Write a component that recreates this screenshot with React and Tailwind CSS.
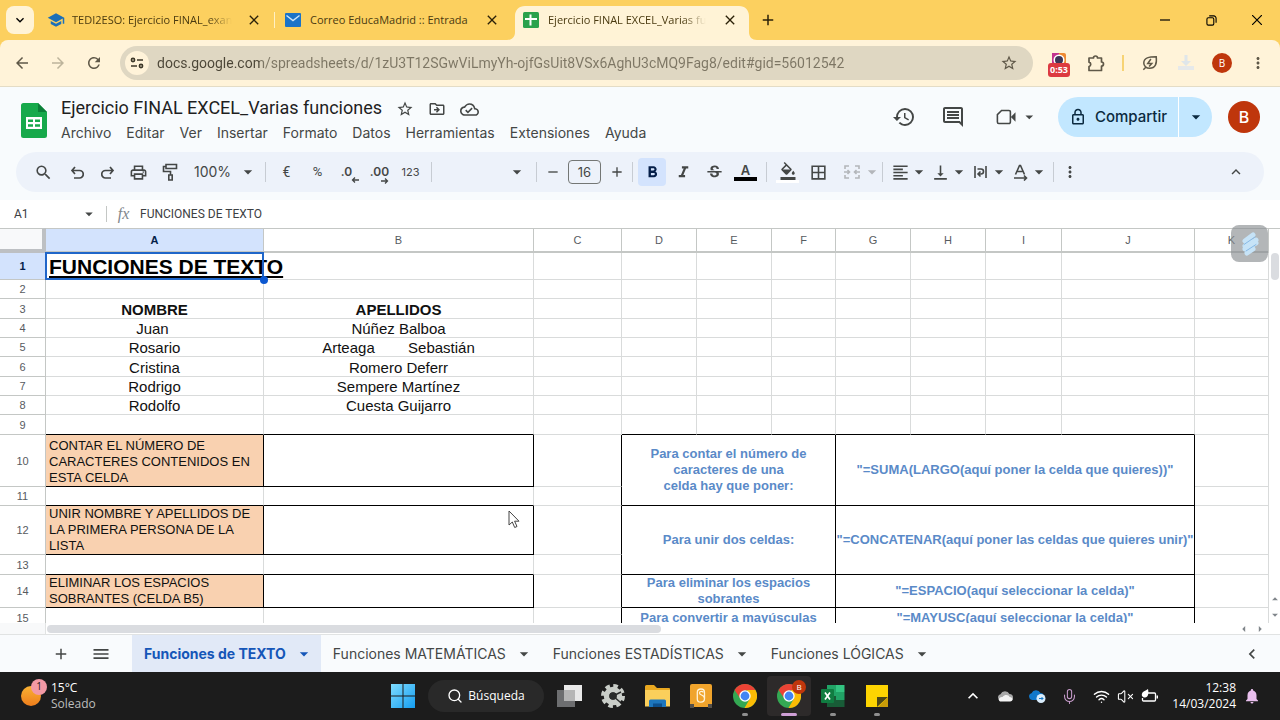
import React, { useState } from 'react';
import {
  MdAdd,
  MdArrowBack,
  MdArrowDropDown,
  MdArrowForward,
  MdChevronLeft,
  MdClose,
  MdExpandLess,
  MdExpandMore,
  MdFormatAlignLeft,
  MdFormatBold,
  MdFormatColorFill,
  MdFormatItalic,
  MdHistory,
  MdMenu,
  MdMoreVert,
  MdNotifications,
  MdOutlineBorderAll,
  MdOutlineCloudDone,
  MdOutlineDriveFileMove,
  MdOutlineInsertComment,
  MdOutlineLock,
  MdOutlinePrint,
  MdRefresh,
  MdRemove,
  MdSchool,
  MdSearch,
  MdStarBorder,
  MdStrikethroughS,
  MdVerticalAlignBottom,
} from 'react-icons/md';
import { Wifi, VolumeX, Mic, Search } from 'lucide-react';

const browserTabs = [
  { id: 1, title: 'TEDI2ESO: Ejercicio FINAL_exan', icon: 'school' },
  { id: 2, title: 'Correo EducaMadrid :: Entrada', icon: 'mail' },
  { id: 3, title: 'Ejercicio FINAL EXCEL_Varias fu', icon: 'sheet' },
];

const menus = [
  'Archivo',
  'Editar',
  'Ver',
  'Insertar',
  'Formato',
  'Datos',
  'Herramientas',
  'Extensiones',
  'Ayuda',
];

const sheets = [
  'Funciones de TEXTO',
  'Funciones MATEMÁTICAS',
  'Funciones ESTADÍSTICAS',
  'Funciones LÓGICAS',
];

const columns = ['A', 'B', 'C', 'D', 'E', 'F', 'G', 'H', 'I', 'J', 'K'];

const people = [
  { row: 4, height: 'h-[19px]', name: 'Juan ', surname: 'Núñez Balboa' },
  { row: 5, height: 'h-[19px]', name: 'Rosario', surname: 'Arteaga        Sebastián' },
  { row: 6, height: 'h-[20px]', name: 'Cristina', surname: 'Romero Deferr' },
  { row: 7, height: 'h-[19px]', name: 'Rodrigo', surname: 'Sempere Martínez' },
  { row: 8, height: 'h-[19px]', name: 'Rodolfo', surname: 'Cuesta Guijarro' },
];

/* ---------- browser ---------- */

function TabIcon({ name }) {
  if (name === 'school') return <MdSchool className="size-[18px] text-[#1b6fb8]" />;
  if (name === 'mail') {
    return (
      <svg viewBox="0 0 16 14" className="h-[14px] w-4">
        <rect width="16" height="14" rx="1" fill="#1a73c8" />
        <path d="M1.5 2.5 8 7.5l6.5-5" fill="none" stroke="#cfe6fa" strokeWidth="1.4" />
      </svg>
    );
  }
  return (
    <svg viewBox="0 0 16 16" className="size-4">
      <rect width="16" height="16" rx="1.5" fill="#2ba24c" />
      <path d="M6.5 2.500h2v3.500H14v2H8.500v5.500h-2V8H2V6h4.500z" fill="#fff" />
    </svg>
  );
}

function BrowserTab({ tab, active, separator, onSelect }) {
  return (
    <div className="relative flex h-full w-[238px] min-w-0 pt-[6px]">
      {active && (
        <svg viewBox="0 0 250 34" className="absolute bottom-0 -left-[6px] h-[34px] w-[250px]">
          <path
            d="M0 34c5 0 8-3 8-8V10C8 4 12 0 18 0h214c6 0 10 4 10 10v16c0 5 3 8 8 8z"
            fill="#fff3d6"
          />
        </svg>
      )}
      <div className="relative flex h-7 w-full items-center pl-[10px]">
        <span className="flex w-[25px] shrink-0 items-center">
          <TabIcon name={tab.icon} />
        </span>
        <button
          onClick={onSelect}
          className={`mr-auto text-left text-[11px] whitespace-nowrap text-[#4a3a10] ${
            tab.icon === 'mail' ? '' : 'mask-r-from-85%'
          }`}
        >
          {tab.title}
        </button>
        <button aria-label="Cerrar pestaña" className="mr-[13px] shrink-0 text-[#2b2108]">
          <MdClose className="size-4" />
        </button>
      </div>
      {separator && <span className="absolute top-3 right-0 h-4 w-px bg-[#fff0c4]" />}
    </div>
  );
}

function TabStrip() {
  const [current, setCurrent] = useState(3);
  return (
    <div className="flex h-10 items-center bg-[#fcd05f] pl-[6px]">
      <button
        aria-label="Buscar pestañas"
        className="mr-[3px] flex size-7 shrink-0 items-center justify-center rounded-lg bg-[#fff3d6] text-black"
      >
        <MdExpandMore className="size-4" />
      </button>
      {browserTabs.map((tab) => (
        <BrowserTab
          key={tab.id}
          tab={tab}
          active={current === tab.id}
          separator={tab.id === 1}
          onSelect={() => setCurrent(tab.id)}
        />
      ))}
      <button aria-label="Nueva pestaña" className="ml-2 text-[#2b2108]">
        <MdAdd className="size-[18px]" />
      </button>
      <div className="ml-auto flex h-full text-black">
        <button aria-label="Minimizar" className="flex w-[46px] items-center justify-center">
          <svg viewBox="0 0 10 10" className="size-[10px]">
            <path d="M0 5h10" stroke="currentColor" strokeWidth="1.2" />
          </svg>
        </button>
        <button aria-label="Restaurar" className="flex w-[46px] items-center justify-center">
          <svg viewBox="0 0 12 12" className="size-[11px]" fill="none" stroke="currentColor" strokeWidth="1.2">
            <rect x="1" y="3" width="7.500" height="8" rx="1.500" />
            <path d="M3.500 1h5a2.500 2.500 0 0 1 2.500 2.500V8.500" />
          </svg>
        </button>
        <button aria-label="Cerrar" className="flex w-[46px] items-center justify-center">
          <svg viewBox="0 0 10 10" className="size-[10px]">
            <path d="M0 0l10 10M10 0L0 10" stroke="currentColor" strokeWidth="1.200" />
          </svg>
        </button>
      </div>
    </div>
  );
}

function AddressBar() {
  return (
    <div className="bg-[#fcd05f]">
      <div className="flex h-[47px] items-center rounded-t-lg border-b border-[#e4dcc6] bg-[#fff3d9] pl-1 text-[#5f5848]">
        <button aria-label="Atrás" className="flex w-9 justify-center">
          <MdArrowBack className="size-[18px]" />
        </button>
        <button aria-label="Adelante" className="flex w-9 justify-center text-[#bdb49c]">
          <MdArrowForward className="size-[18px]" />
        </button>
        <button aria-label="Recargar" className="flex w-9 justify-center">
          <MdRefresh className="size-[18px]" />
        </button>
        <div className="ml-2 flex h-[34px] min-w-0 flex-1 items-center rounded-full bg-[#dfd7c2] pl-[5px]">
          <button
            aria-label="Información del sitio"
            className="flex size-6 shrink-0 items-center justify-center rounded-full bg-[#fff3d9] text-[#3c3728]"
          >
            <svg viewBox="0 0 14 12" className="h-3 w-[14px]" fill="none" stroke="currentColor" strokeWidth="1.600">
              <circle cx="3" cy="3" r="1.600" />
              <path d="M7 3h6M1 9h6" />
              <circle cx="11" cy="9" r="1.600" />
            </svg>
          </button>
          <input
            aria-label="Dirección"
            defaultValue="docs.google.com/spreadsheets/d/1zU3T12SGwViLmyYh-ojfGsUit8VSx6AghU3cMQ9Fag8/edit#gid=56012542"
            className="ml-2 min-w-0 flex-1 bg-[linear-gradient(90deg,#4b4536_103px,#7d7664_103px)] bg-clip-text font-[Roboto,sans-serif] text-sm text-transparent outline-none"
          />
          <button aria-label="Marcador" className="flex w-12 justify-center">
            <MdStarBorder className="size-[18px]" />
          </button>
        </div>
        <button aria-label="Grabación" className="relative ml-[7px] flex w-[38px] justify-center">
          <svg viewBox="0 0 22 24" className="h-6 w-[22px]">
            <path d="M4 2h8v10H4z" fill="#c2338f" />
            <path d="M11 2h5a2 2 0 0 1 2 2v8h-7z" fill="#ef8a33" />
            <circle cx="11" cy="9" r="5.500" fill="#fff" />
            <circle cx="11" cy="9" r="4" fill="#3c3557" />
          </svg>
          <span className="absolute top-3 h-[14px] rounded-[3px] bg-[#dc3a41] px-[2px] text-[9px] leading-[14px] font-bold text-white">
            0:53
          </span>
        </button>
        <button aria-label="Extensiones" className="flex w-9 justify-center">
          <svg viewBox="0 0 18 18" className="size-[18px]" fill="none" stroke="currentColor" strokeWidth="1.700">
            <path d="M2 4h4.500a2 2 0 0 1 4 0H14.500v4a2 2 0 0 1 0 4v4.500H2v-4a2.200 2.200 0 0 0 0-4.300z" strokeLinejoin="round" />
          </svg>
        </button>
        <span className="mx-2 h-4 w-[2px] bg-[#f7d374]" />
        <button aria-label="Ahorro de energía" className="flex w-9 justify-center">
          <svg viewBox="0 0 18 18" className="size-4" fill="none" stroke="currentColor" strokeWidth="1.700">
            <path d="M16 2c1 8-1 13-7.500 13C5 15 2 12.500 2 9c0-6 6-7 14-7zM4 14l-2.500 2.500" />
            <path d="M10 4.500 6.500 9.500h4.500L8 13" />
          </svg>
        </button>
        <button aria-label="Descargas" className="flex w-9 justify-center">
          <svg viewBox="0 0 18 18" className="size-[18px]">
            <path d="M7.500 1h3v6H14l-5 5-5-5h3.500z" fill="#dfe6ea" />
            <path d="M1 12h16v4H1z" fill="#e6e9ea" />
          </svg>
        </button>
        <button aria-label="Perfil" className="flex w-9 justify-center">
          <span className="flex size-5 items-center justify-center rounded-full bg-[#bf360c] text-[10px] text-white">
            B
          </span>
        </button>
        <button aria-label="Más" className="mr-1 flex w-9 justify-center">
          <MdMoreVert className="size-[18px]" />
        </button>
      </div>
    </div>
  );
}

/* ---------- document header ---------- */

function SheetsLogo() {
  return (
    <svg viewBox="0 0 26 35" className="mt-4 h-[35px] w-[26px] shrink-0">
      <path d="M2.500 0H17l9 9v23.500a2.500 2.500 0 0 1-2.500 2.500h-21A2.500 2.500 0 0 1 0 32.500v-30A2.500 2.500 0 0 1 2.500 0z" fill="#17a94b" />
      <path d="M17 0l9 9h-9z" fill="#0c7f38" />
      <path d="M5 14h16v12H5z" fill="#fff" />
      <path d="M7 16.500h5v2.500H7zM14 16.500h5v2.500h-5zM7 21.200h5v2.500H7zM14 21.200h5v2.500h-5z" fill="#17a94b" />
    </svg>
  );
}

function DocumentHeader() {
  return (
    <header className="flex h-[65px] pr-5 pl-[21px] text-[#444746]">
      <SheetsLogo />
      <div className="ml-[14px]">
        <div className="mt-[9px] flex h-6 items-center">
          <h1 className="font-[Roboto,sans-serif] text-lg text-[#1f1f1f]">
            Ejercicio FINAL EXCEL_Varias funciones
          </h1>
          <button aria-label="Destacar" className="mt-[2px] ml-[14px]">
            <MdStarBorder className="size-[18px]" />
          </button>
          <button aria-label="Mover" className="mt-[2px] ml-[14px]">
            <MdOutlineDriveFileMove className="size-[18px]" />
          </button>
          <button aria-label="Estado del documento" className="mt-[2px] ml-[14px]">
            <MdOutlineCloudDone className="size-[19px]" />
          </button>
        </div>
        <nav className="mt-[3px] flex gap-[15px] text-[14px] leading-5">
          {menus.map((menu) => (
            <button key={menu}>{menu}</button>
          ))}
        </nav>
      </div>
      <div className="mt-[10px] ml-auto flex h-10 items-center">
        <button aria-label="Historial" className="flex w-12 justify-center">
          <MdHistory className="size-6" />
        </button>
        <button aria-label="Comentarios" className="flex w-[50px] justify-center">
          <MdOutlineInsertComment className="size-6" />
        </button>
        <button aria-label="Videollamada" className="ml-[18px] flex w-[43px] items-center">
          <svg viewBox="0 0 22 18" className="h-[18px] w-[22px]">
            <path
              d="M6 2h8a1.500 1.500 0 0 1 1.500 1.500v11A1.500 1.500 0 0 1 14 16H3A1.500 1.500 0 0 1 1.500 14.500V6.500z"
              fill="none"
              stroke="currentColor"
              strokeWidth="1.700"
            />
            <path d="M16 9l5-5v10z" fill="currentColor" />
          </svg>
          <MdArrowDropDown className="ml-1 size-5" />
        </button>
        <div className="ml-[19px] flex h-10 rounded-full bg-[#c2e7ff] text-[#0b2a40]">
          <button className="flex w-[120px] items-center justify-center gap-2 text-[15px] font-medium">
            <MdOutlineLock className="size-[18px]" />
            Compartir
          </button>
          <button
            aria-label="Opciones para compartir"
            className="flex w-[34px] items-center justify-center border-l border-white"
          >
            <MdArrowDropDown className="size-5" />
          </button>
        </div>
        <button
          aria-label="Cuenta"
          className="ml-4 flex size-8 items-center justify-center rounded-full bg-[#bf360c] text-base font-medium text-white"
        >
          B
        </button>
      </div>
    </header>
  );
}

function ToolButton({ label, children }) {
  return (
    <button aria-label={label} className="flex h-7 w-[31px] items-center justify-center">
      {children}
    </button>
  );
}

function ToolMenu({ label, children }) {
  return (
    <button aria-label={label} className="flex h-7 w-10 items-center pl-[3px]">
      {children}
      <MdArrowDropDown className="-ml-[1px] size-5 shrink-0" />
    </button>
  );
}

function Divider() {
  return <span className="mx-[5px] h-5 w-px bg-[#c7ccd3]" />;
}

function Toolbar() {
  const [bold, setBold] = useState(true);
  return (
    <div
      role="toolbar"
      className="mx-4 mb-2 flex h-10 items-center rounded-full bg-[#edf2fa] pr-[19px] pl-[11px] text-[#444746]"
    >
      <button aria-label="Buscar en los menús" className="mr-[2px] flex w-8 justify-center">
        <MdSearch className="size-[19px]" />
      </button>
      <ToolButton label="Deshacer">
        <svg viewBox="0 0 14 14" className="mt-[2px] size-[14px]" fill="none" stroke="currentColor" strokeWidth="1.700">
          <path d="M5 1 2 4.500 5 8M2 4.500h7.500a3.300 3.300 0 0 1 0 7.500H4" />
        </svg>
      </ToolButton>
      <ToolButton label="Rehacer">
        <svg viewBox="0 0 14 14" className="mt-[2px] size-[14px]" fill="none" stroke="currentColor" strokeWidth="1.700">
          <path d="M9 1l3 3.500L9 8M12 4.500H4.500a3.300 3.300 0 0 0 0 7.500H10" />
        </svg>
      </ToolButton>
      <ToolButton label="Imprimir">
        <MdOutlinePrint className="size-[19px]" />
      </ToolButton>
      <ToolButton label="Copiar formato">
        <svg viewBox="0 0 16 18" className="h-[18px] w-4" fill="none" stroke="currentColor" strokeWidth="1.600">
          <path d="M4 1.500h10.500v4H4zM4 3.500H1.500v5h7V12M6.800 12h3.400v5H6.800z" />
        </svg>
      </ToolButton>
      <div className="relative flex w-[75px] items-center">
        <select aria-label="Zoom" className="w-full appearance-none pl-[9px] text-sm outline-none">
          <option>100%</option>
        </select>
        <MdArrowDropDown className="pointer-events-none absolute right-[2px] size-5" />
      </div>
      <Divider />
      <ToolButton label="Formato de moneda">
        <span className="font-[Roboto,sans-serif] text-[14px]">€</span>
      </ToolButton>
      <ToolButton label="Formato de porcentaje">
        <span className="font-[Roboto,sans-serif] text-[13px]">%</span>
      </ToolButton>
      <ToolButton label="Reducir decimales">
        <span className="relative mr-1 text-xs leading-4 font-semibold">
          .0
          <svg viewBox="0 0 8 6" className="absolute -right-[7px] -bottom-[3px] h-[6px] w-2">
            <path d="M8 3H2M4 .5 1.500 3 4 5.500" fill="none" stroke="currentColor" strokeWidth="1.300" />
          </svg>
        </span>
      </ToolButton>
      <ToolButton label="Aumentar decimales">
        <span className="relative text-xs leading-4 font-semibold">
          .00
          <svg viewBox="0 0 8 6" className="absolute right-0 -bottom-[4px] h-[6px] w-2">
            <path d="M0 3h6M4 .5 6.500 3 4 5.500" fill="none" stroke="currentColor" strokeWidth="1.300" />
          </svg>
        </span>
      </ToolButton>
      <ToolButton label="Más formatos">
        <span className="text-[11px]">123</span>
      </ToolButton>
      <Divider />
      <div className="relative flex w-[94px] items-center">
        <select aria-label="Fuente" className="w-full appearance-none text-sm outline-none">
          <option aria-label="Arial" />
        </select>
        <MdArrowDropDown className="pointer-events-none absolute right-1 size-5" />
      </div>
      <Divider />
      <button aria-label="Reducir tamaño" className="flex w-[21px] justify-center">
        <MdRemove className="size-4" />
      </button>
      <input
        aria-label="Tamaño de fuente"
        defaultValue="16"
        className="mx-[5px] h-6 w-[33px] rounded border border-[#747775] text-center text-[13px] outline-none"
      />
      <button aria-label="Aumentar tamaño" className="flex w-[21px] justify-center">
        <MdAdd className="size-4" />
      </button>
      <Divider />
      <button
        aria-label="Negrita"
        aria-pressed={bold}
        onClick={() => setBold(!bold)}
        className={`mr-[2px] flex size-7 items-center justify-center rounded text-[#041e49] ${
          bold ? 'bg-[#d3e3fd]' : ''
        }`}
      >
        <MdFormatBold className="size-[19px]" />
      </button>
      <ToolButton label="Cursiva">
        <MdFormatItalic className="size-[19px]" />
      </ToolButton>
      <ToolButton label="Tachado">
        <MdStrikethroughS className="size-[19px]" />
      </ToolButton>
      <ToolButton label="Color del texto">
        <span className="flex w-[23px] flex-col items-center">
          <span className="text-[13px] leading-[14px] font-semibold">A</span>
          <span className="h-1 w-full bg-black" />
        </span>
      </ToolButton>
      <Divider />
      <ToolButton label="Color de relleno">
        <span className="flex w-[23px] flex-col items-center">
          <MdFormatColorFill className="size-[18px]" />
          <span className="h-[3px] w-full bg-white" />
        </span>
      </ToolButton>
      <ToolButton label="Bordes">
        <MdOutlineBorderAll className="size-[19px]" />
      </ToolButton>
      <button aria-label="Combinar celdas" className="flex h-7 w-[43px] items-center pl-[10px] text-[#b3b6ba]">
        <svg viewBox="0 0 16 14" className="h-[14px] w-4 shrink-0" fill="none" stroke="currentColor" strokeWidth="1.600">
          <path d="M1 4V1h4M11 1h4v3M1 10v3h4M11 13h4v-3M0 7h5M3.500 5l2 2-2 2M16 7h-5M12.500 5l-2 2 2 2" />
        </svg>
        <MdArrowDropDown className="ml-[2px] size-5 shrink-0" />
      </button>
      <Divider />
      <ToolMenu label="Alineación horizontal">
        <MdFormatAlignLeft className="size-[19px] shrink-0" />
      </ToolMenu>
      <ToolMenu label="Alineación vertical">
        <MdVerticalAlignBottom className="size-[19px] shrink-0" />
      </ToolMenu>
      <ToolMenu label="Ajuste de texto">
        <svg viewBox="0 0 19 18" className="h-[18px] w-[19px] shrink-0" fill="none" stroke="currentColor" strokeWidth="1.600">
          <path d="M4 3v12M15 3v12M6.500 6h3.500a2.300 2.300 0 0 1 0 5H7.500M9.500 8.500 7 11l2.500 2.500" />
        </svg>
      </ToolMenu>
      <ToolMenu label="Rotación de texto">
        <svg viewBox="0 0 19 18" className="h-[18px] w-[19px] shrink-0" fill="none" stroke="currentColor" strokeWidth="1.600">
          <path d="M4.500 11.500 8.500 2.500h1L13.500 11.500M6 8.500h6M3 15h12M13 12.500l2.500 2.500-2.500 2.500" />
        </svg>
      </ToolMenu>
      <Divider />
      <button aria-label="Más herramientas" className="flex w-[21px] justify-center">
        <MdMoreVert className="size-[18px]" />
      </button>
      <button aria-label="Ocultar los menús" className="ml-auto">
        <MdExpandLess className="size-[18px]" />
      </button>
    </div>
  );
}

function FormulaBar() {
  return (
    <div className="flex h-7 items-center bg-white font-[Roboto,sans-serif] text-xs text-[#3c4043]">
      <input
        aria-label="Cuadro de nombres"
        defaultValue="A1"
        className="w-20 pl-[14px] outline-none"
      />
      <button aria-label="Intervalos con nombre" className="text-[#444746]">
        <MdArrowDropDown className="size-[18px]" />
      </button>
      <span className="ml-2 h-4 w-px bg-[#c4c7c5]" />
      <span className="w-[33px] text-center font-['Liberation_Serif',serif] text-base text-[#80868b] italic">
        fx
      </span>
      <input
        aria-label="Barra de fórmulas"
        defaultValue="FUNCIONES DE TEXTO"
        className="min-w-0 flex-1 outline-none"
      />
    </div>
  );
}

/* ---------- grid ---------- */

function RowHead({ n, selected }) {
  return (
    <th
      scope="row"
      className={`border-r border-b border-[#c4c7c5] p-0 text-[11px] leading-4 ${
        selected ? 'bg-[#d3e3fd] font-bold text-[#041e49]' : 'font-normal text-[#575b5f]'
      }`}
    >
      {n}
    </th>
  );
}

function Cells({ count }) {
  return Array.from({ length: count }, (_, i) => (
    <td key={i} className="border-r border-b border-[#d9dbdb] p-0" />
  ));
}

function Task({ children }) {
  return (
    <>
      <td className="border-r border-b border-black bg-[#f9d1b0] p-0 pl-[3px] align-bottom text-[13px] leading-4 whitespace-nowrap">
        {children}
      </td>
      <td className="border-r border-b border-black p-0" />
    </>
  );
}

// cells under which a framed task starts
function TopEdge() {
  return (
    <>
      <td className="border-r border-b border-r-[#d9dbdb] border-b-black p-0" />
      <td className="border-r border-b border-r-[#d9dbdb] border-b-black p-0" />
    </>
  );
}

function SideEdge() {
  return <td className="border-r border-b border-r-black border-b-[#d9dbdb] p-0" />;
}

function Help({ rows = 1, text, formula }) {
  return (
    <>
      <td
        colSpan={3}
        rowSpan={rows}
        className="border-r border-b border-black p-0 text-center text-[13px] leading-4 font-bold text-[#5a8ac8]"
      >
        {text}
      </td>
      <td
        colSpan={4}
        rowSpan={rows}
        className="overflow-hidden border-r border-b border-black p-0 text-center text-[13px] leading-4 font-bold whitespace-nowrap text-[#5a8ac8]"
      >
        {formula}
      </td>
    </>
  );
}

function Grid() {
  return (
    <div className="relative flex min-h-0 flex-1 bg-white font-['Liberation_Sans',Arial,sans-serif]">
      <div className="min-w-0 flex-1 overflow-hidden">
        <table className="w-full table-fixed border-separate border-spacing-0 text-[#111111]">
          <colgroup>
            <col className="w-[46px]" />
            <col className="w-[218px]" />
            <col className="w-[270px]" />
            <col className="w-[88px]" />
            <col className="w-[75px]" />
            <col className="w-[75px]" />
            <col className="w-[64px]" />
            <col className="w-[75px]" />
            <col className="w-[75px]" />
            <col className="w-[76px]" />
            <col className="w-[133px]" />
            <col />
          </colgroup>
          <thead>
            <tr className="h-[25px]">
              <td className="border-t border-r-4 border-b-4 border-t-[#c4c7c5] border-r-[#bdc0c3] border-b-[#bdc0c3] bg-[#f8f9fa] p-0" />
              {columns.map((c) => (
                <th
                  key={c}
                  scope="col"
                  className={`border-t border-r border-b-2 border-[#c4c7c5] p-0 text-[11px] leading-4 ${
                    c === 'A' ? 'bg-[#d3e3fd] font-bold text-[#041e49]' : 'font-normal text-[#575b5f]'
                  }`}
                >
                  {c}
                </th>
              ))}
            </tr>
          </thead>
          <tbody>
            <tr className="h-[27px]">
              <RowHead n={1} selected />
              <td className="relative border-r border-b border-[#d9dbdb] p-0 pt-[2px] pl-[3px] text-[21px] leading-6 font-bold whitespace-nowrap text-black underline decoration-2 underline-offset-2">
                FUNCIONES DE TEXTO
                <span className="absolute -inset-px border-2 border-[#1f66c9]" />
                <span className="absolute -right-[5px] -bottom-[5px] size-2 rounded-full bg-[#0b57d0]" />
              </td>
              <Cells count={10} />
            </tr>
            <tr className="h-[19px]">
              <RowHead n={2} />
              <Cells count={11} />
            </tr>
            <tr className="h-[20px]">
              <RowHead n={3} />
              <td className="border-r border-b border-[#d9dbdb] p-0 pt-[2px] text-center text-[15px] leading-4 font-bold">
                NOMBRE
              </td>
              <td className="border-r border-b border-[#d9dbdb] p-0 pt-[2px] text-center text-[15px] leading-4 font-bold">
                APELLIDOS
              </td>
              <Cells count={9} />
            </tr>
            {people.map((p) => (
              <tr key={p.row} className={p.height}>
                <RowHead n={p.row} />
                <td className="border-r border-b border-[#d9dbdb] p-0 pt-[2px] text-center text-[15px] leading-4 whitespace-pre">
                  {p.name}
                </td>
                <td className="border-r border-b border-[#d9dbdb] p-0 pt-[2px] text-center text-[15px] leading-4 whitespace-pre">
                  {p.surname}
                </td>
                <Cells count={9} />
              </tr>
            ))}
            <tr className="h-[20px]">
              <RowHead n={9} />
              <TopEdge />
              <Cells count={1} />
              {['D', 'E', 'F', 'G', 'H', 'I', 'J'].map((c) => (
                <td key={c} className="border-r border-b border-r-[#d9dbdb] border-b-black p-0" />
              ))}
              <Cells count={1} />
            </tr>
            <tr className="h-[52px]">
              <RowHead n={10} />
              <Task>
                CONTAR EL NÚMERO DE
                <br />
                CARACTERES CONTENIDOS EN
                <br />
                ESTA CELDA
              </Task>
              <SideEdge />
              <Help
                rows={2}
                text={
                  <>
                    Para contar el número de
                    <br />
                    caracteres de una
                    <br />
                    celda hay que poner:
                  </>
                }
                formula={'"=SUMA(LARGO(aquí poner la celda que quieres))"'}
              />
              <Cells count={1} />
            </tr>
            <tr className="h-[19px]">
              <RowHead n={11} />
              <TopEdge />
              <SideEdge />
              <Cells count={1} />
            </tr>
            <tr className="h-[49px]">
              <RowHead n={12} />
              <Task>
                UNIR NOMBRE Y APELLIDOS DE
                <br />
                LA PRIMERA PERSONA DE LA
                <br />
                LISTA
              </Task>
              <SideEdge />
              <Help
                rows={2}
                text="Para unir dos celdas:"
                formula={'"=CONCATENAR(aquí poner las celdas que quieres unir)"'}
              />
              <Cells count={1} />
            </tr>
            <tr className="h-[20px]">
              <RowHead n={13} />
              <TopEdge />
              <SideEdge />
              <Cells count={1} />
            </tr>
            <tr className="h-[33px]">
              <RowHead n={14} />
              <Task>
                ELIMINAR LOS ESPACIOS
                <br />
                SOBRANTES (CELDA B5)
              </Task>
              <SideEdge />
              <Help
                text={
                  <>
                    Para eliminar los espacios
                    <br />
                    sobrantes
                  </>
                }
                formula={'"=ESPACIO(aquí seleccionar la celda)"'}
              />
              <Cells count={1} />
            </tr>
            <tr className="h-[20px]">
              <RowHead n={15} />
              <Cells count={2} />
              <SideEdge />
              <Help
                text="Para convertir a mayúsculas"
                formula={'"=MAYUSC(aquí seleccionar la celda)"'}
              />
              <Cells count={1} />
            </tr>
          </tbody>
        </table>
      </div>
      <div className="flex w-[11px] shrink-0 flex-col items-center border-t border-[#c4c7c5] pt-6">
        <span className="h-[27px] w-2 rounded bg-[#dadce0]" />
        <button aria-label="Subir" className="mt-auto flex h-4 items-center">
          <MdArrowDropDown className="size-[14px] rotate-180 text-[#80868b]" />
        </button>
        <button aria-label="Bajar" className="flex h-4 items-center">
          <MdArrowDropDown className="size-[14px] text-[#80868b]" />
        </button>
      </div>

      {/* floating extension button */}
      <button
        aria-label="Extensión"
        className="absolute -top-[3px] right-[12px] flex size-[37px] items-center justify-center rounded-lg bg-[#8b8f92]/65"
      >
        <svg viewBox="0 0 22 26" className="h-[26px] w-[22px]">
          <path d="M6 10 14 4M6 15l11-6M6 18l11-6M8 22l6-4" stroke="#c6e3f7" strokeWidth="5" strokeLinecap="round" />
          <path d="M5 13.500 16 6M7 20l10-6.500" stroke="#86b9e6" strokeWidth="1" strokeLinecap="round" />
        </svg>
      </button>
      {/* mouse pointer */}
      <svg viewBox="0 0 12 19" className="pointer-events-none absolute top-[282px] left-[508px] h-[19px] w-3">
        <path
          d="M1 1v14l3.300-3 2.400 5.500 2.300-1-2.400-5.300H11z"
          fill="#fff"
          stroke="#444"
          strokeWidth="1"
        />
      </svg>
    </div>
  );
}

function HorizontalScroll() {
  return (
    <div className="flex h-3 items-center border-b border-[#e1e3e3] bg-white">
      <span className="h-full w-[46px] border-r border-[#e1e3e3] bg-[#f8f9fa]" />
      <span className="ml-px h-2 w-[48%] rounded bg-[#dadce0]" />
      <div className="ml-auto flex pr-3 text-[#80868b]">
        <button aria-label="Izquierda" className="flex w-4 justify-center">
          <MdArrowDropDown className="size-[14px] rotate-90" />
        </button>
        <button aria-label="Derecha" className="flex w-4 justify-center">
          <MdArrowDropDown className="size-[14px] -rotate-90" />
        </button>
      </div>
    </div>
  );
}

function SheetTabs() {
  const [active, setActive] = useState(sheets[0]);
  return (
    <div className="flex h-[37px] items-center bg-[#f9fbfd] pl-[41px] text-sm text-[#444746]">
      <button aria-label="Añadir hoja" className="flex w-10 justify-center">
        <MdAdd className="size-[18px]" />
      </button>
      <button aria-label="Todas las hojas" className="mr-[11px] flex w-10 justify-center">
        <MdMenu className="size-5" />
      </button>
      {sheets.map((sheet) => (
        <button
          key={sheet}
          onClick={() => setActive(sheet)}
          className={`flex h-full items-center gap-2 pr-[7px] pl-3 whitespace-nowrap ${
            active === sheet ? 'bg-[#e1e9f7] font-bold text-[#1556b8]' : ''
          }`}
        >
          {sheet}
          <MdArrowDropDown className="size-5" />
        </button>
      ))}
      <button aria-label="Mostrar panel lateral" className="mr-[18px] ml-auto">
        <MdChevronLeft className="size-5" />
      </button>
    </div>
  );
}

/* ---------- windows taskbar ---------- */

function ChromeLogo() {
  return (
    <svg viewBox="0 0 24 24" className="size-6">
      <circle cx="12" cy="12" r="12" fill="#34a853" />
      <path d="M1.600 6A12 12 0 0 1 22.400 6L12 6.500 7.300 14.500z" fill="#ea4335" />
      <path d="M22.400 6A12 12 0 0 1 11.500 24l5.500-9.500L14 6z" fill="#fbbc05" />
      <circle cx="12" cy="12" r="5.700" fill="#fff" />
      <circle cx="12" cy="12" r="4.400" fill="#4285f4" />
    </svg>
  );
}

function TaskApp({ label, running, active, children }) {
  return (
    <button
      aria-label={label}
      className={`relative flex h-10 w-11 items-center justify-center rounded ${
        active ? 'bg-[#2d2a2a]' : ''
      }`}
    >
      {children}
      {running && (
        <span
          className={`absolute bottom-0 h-[3px] rounded-full ${
            active ? 'w-4 bg-[#cf9fd6]' : 'w-[6px] bg-[#8f8f8f]'
          }`}
        />
      )}
    </button>
  );
}

function Taskbar() {
  return (
    <footer className="grid h-12 shrink-0 grid-cols-[1fr_auto_1fr] items-center bg-[#1c1c1c] font-['Open_Sans',sans-serif] text-xs text-white">
      <div className="flex items-center pl-[20px]">
        <span className="relative mr-1 h-[34px] w-[27px]">
          <svg viewBox="0 0 27 28" className="h-7 w-[27px]">
            <defs>
              <linearGradient id="sun" x1="0" y1="0" x2="0" y2="1">
                <stop offset="0" stopColor="#f9b233" />
                <stop offset="1" stopColor="#ee7d1c" />
              </linearGradient>
            </defs>
            <circle cx="11" cy="17" r="10" fill="url(#sun)" />
          </svg>
          <span className="absolute top-0 right-0 flex size-4 items-center justify-center rounded-full bg-[#f299a5] text-[10px] text-[#2a1a1c]">
            1
          </span>
        </span>
        <div className="leading-4">
          <p>15°C</p>
          <p className="text-[#bdbdbd]">Soleado</p>
        </div>
      </div>

      <div className="flex items-center">
        <TaskApp label="Inicio">
          <svg viewBox="0 0 24 24" className="size-6">
            <defs>
              <linearGradient id="win" x1="0" y1="0" x2="1" y2="1">
                <stop offset="0" stopColor="#7fdcff" />
                <stop offset="1" stopColor="#149df0" />
              </linearGradient>
            </defs>
            <path d="M0 0h11.500v11.500H0zM12.500 0H24v11.500H12.500zM0 12.500h11.500V24H0zM12.500 12.500H24V24H12.500z" fill="url(#win)" />
          </svg>
        </TaskApp>
        <button className="mx-[3px] flex h-8 w-[116px] items-center justify-center gap-[5px] rounded-full bg-[#292929] font-medium">
          <Search className="size-4" />
          Búsqueda
        </button>
        <TaskApp label="Vista de tareas">
          <svg viewBox="0 0 25 24" className="h-6 w-[25px]">
            <path d="M7 1h18v16H7z" fill="#e8e8e8" />
            <path d="M0 6h18v17H0z" fill="#77787a" fillOpacity=".9" />
            <path d="M7 6h11v11H7z" fill="#b5b5b5" />
          </svg>
        </TaskApp>
        <TaskApp label="Configuración">
          <svg viewBox="0 0 24 24" className="size-6">
            <circle cx="12" cy="12" r="10" fill="none" stroke="#c9cdc8" strokeWidth="4" strokeDasharray="4.500 3.350" />
            <circle cx="12" cy="12" r="6.500" fill="none" stroke="#c9cdc8" strokeWidth="5.500" />
            <circle cx="12" cy="12" r="3.500" fill="#2a2c2b" />
            <path d="M12 12l8-4M12 12l7 6" stroke="#2a2c2b" strokeWidth="1.500" />
          </svg>
        </TaskApp>
        <TaskApp label="Explorador de archivos">
          <svg viewBox="0 0 25 24" className="h-6 w-[25px]">
            <path d="M0 2.500A1.500 1.500 0 0 1 1.500 1H9l3 3h12a1 1 0 0 1 1 1v17H0z" fill="#e9a820" />
            <path d="M0 6h25v16.500H0z" fill="#fbcf5b" />
            <path d="M4 23v-6a1.500 1.500 0 0 1 1.500-1.500h14A1.500 1.500 0 0 1 21 17v6z" fill="#1d76bd" />
            <path d="M8 19.500h9V23H8z" fill="#0d4f8c" />
          </svg>
        </TaskApp>
        <TaskApp label="Grabador">
          <svg viewBox="0 0 24 24" className="size-6">
            <rect x="1" width="22" height="23" rx="2" fill="#f0a42c" />
            <path
              d="M14 8.500c0-1.500-3.500-1.500-3.500.5 0 2.500 5 1.500 5 5.500 0 2.200-1.500 3.700-3.700 3.700-2 0-3.500-1.200-3.500-3.200V8.500c0-2 1.500-3.500 3.700-3.500s3.500 1.300 3.500 3.500v6"
              fill="none"
              stroke="#fff3d8"
              strokeWidth="1.300"
            />
            <path d="M1 20h4v4H1zM19 20h4v4h-4z" fill="#54504a" />
          </svg>
        </TaskApp>
        <TaskApp label="Chrome" running>
          <ChromeLogo />
        </TaskApp>
        <TaskApp label="Chrome, perfil B" running active>
          <ChromeLogo />
          <span className="absolute top-1 right-[5px] flex size-[14px] items-center justify-center rounded-full bg-[#bf360c] text-[8px]">
            B
          </span>
        </TaskApp>
        <TaskApp label="Excel" running>
          <svg viewBox="0 0 24 24" className="size-6">
            <path d="M6 1h9v11H6z" fill="#21a366" />
            <path d="M15 1h8.500v7H15z" fill="#33c481" />
            <path d="M15 8h8.500v8H15z" fill="#21a366" />
            <path d="M6 12h9v4h8.500v7H6z" fill="#185c37" />
            <rect y="5" width="13" height="14" rx="1" fill="#107c41" />
            <path d="M4 8.500l5 7M9 8.500l-5 7" stroke="#fff" strokeWidth="1.700" />
          </svg>
        </TaskApp>
        <TaskApp label="Notas rápidas" running>
          <svg viewBox="0 0 22 22" className="size-[22px]">
            <path d="M0 0h22v22H0z" fill="#fdd401" />
            <path d="M11 22V12h11z" fill="#4d4716" />
            <path d="M12 22h10V12z" fill="#c99c08" />
          </svg>
        </TaskApp>
      </div>

      <div className="flex items-center justify-end pr-[19px]">
        <MdExpandLess className="mr-[14px] size-5" />
        <svg viewBox="0 0 16 12" className="mr-[15px] h-3 w-4">
          <path d="M4 11a3.500 3.500 0 0 1-.5-6.800A5 5 0 0 1 12.500 4 3.500 3.500 0 0 1 12.500 11z" fill="#a9a9a9" />
          <path d="M3 11.500c-3-2 0-5 2.500-4.500C8 4 12 5 12.500 7c4 0 4 4.500.5 4.500z" fill="#f4f4f4" />
        </svg>
        <svg viewBox="0 0 18 14" className="mr-[15px] h-[14px] w-[18px]">
          <path d="M4 11a3.500 3.500 0 0 1-.5-6.800A5 5 0 0 1 12.500 4 3.500 3.500 0 0 1 12.500 11z" fill="#1278ca" />
          <circle cx="13" cy="9.500" r="4.500" fill="#d9ecfb" />
          <path d="M11 9.500h4M13.500 8l1.500 1.500L13.500 11" stroke="#1278ca" fill="none" />
        </svg>
        <Mic className="mr-[15px] size-[17px] text-[#c79bcb]" strokeWidth={1.5} />
        <Wifi className="mr-[7px] size-[17px]" strokeWidth={2} />
        <VolumeX className="mr-[7px] size-[17px]" strokeWidth={1.5} />
        <svg viewBox="0 0 17 14" className="h-[14px] w-[17px]">
          <path d="M7 4h6.500a1 1 0 0 1 1 1v6a1 1 0 0 1-1 1H2.500a1 1 0 0 1-1-1V9" fill="none" stroke="#fff" strokeWidth="1.300" />
          <path d="M15.500 6.500h1.500v3h-1.500z" fill="#fff" />
          <path d="M7 0c1 5 0 8-3 8.500C1 8.500 0 6 1.500 3.500 3 1.500 5 2 7 0z" fill="#fff" />
        </svg>
        <div className="ml-[14px] text-right leading-4">
          <p>12:38</p>
          <p>14/03/2024</p>
        </div>
        <MdNotifications className="ml-[7px] size-[18px] text-[#e9bfee]" />
      </div>
    </footer>
  );
}

export default function App() {
  return (
    <div className="flex h-screen flex-col overflow-hidden bg-[#f8fbfd] font-[Inter,sans-serif]">
      <div className="shrink-0 font-['Open_Sans',sans-serif]">
        <TabStrip />
        <AddressBar />
      </div>
      <div className="shrink-0">
        <DocumentHeader />
        <Toolbar />
        <FormulaBar />
      </div>
      <Grid />
      <div className="shrink-0">
        <HorizontalScroll />
        <SheetTabs />
      </div>
      <Taskbar />
    </div>
  );
}
